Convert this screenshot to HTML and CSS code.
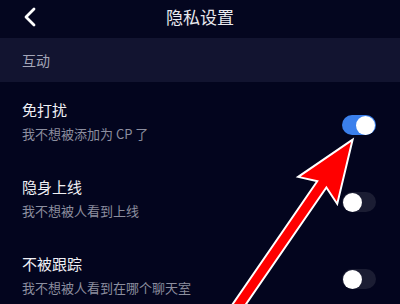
FILE: index.html
```html
<!DOCTYPE html>
<html lang="zh">
<head>
<meta charset="utf-8">
<title>隐私设置</title>
<link rel="stylesheet" href="styles.css">
</head>
<body>
<div class="page">
  <header class="topbar">
    <svg class="back" width="16" height="20" viewBox="0 0 16 20"><polyline points="11,2 3,10 11,18" fill="none" stroke="#ffffff" stroke-width="2.8" stroke-linecap="round" stroke-linejoin="round"/></svg>
    <div class="title">隐私设置</div>
  </header>
  <div class="section">互动</div>
  <div class="item">
    <div class="texts">
      <div class="item-title">免打扰</div>
      <div class="item-sub">我不想被添加为 CP 了</div>
    </div>
    <div class="toggle on"><span class="knob"></span></div>
  </div>
  <div class="item">
    <div class="texts">
      <div class="item-title">隐身上线</div>
      <div class="item-sub">我不想被人看到上线</div>
    </div>
    <div class="toggle"><span class="knob"></span></div>
  </div>
  <div class="item">
    <div class="texts">
      <div class="item-title">不被跟踪</div>
      <div class="item-sub">我不想被人看到在哪个聊天室</div>
    </div>
    <div class="toggle"><span class="knob"></span></div>
  </div>
  <svg class="arrow" width="400" height="304" viewBox="0 0 400 304">
    <polygon points="351,142 300.6,176.4 318.9,180.6 222.6,320.5 230,325.6 326.4,185.7 336.8,201.4" fill="#ff0000" stroke="#ffffff" stroke-width="4" stroke-linejoin="miter" paint-order="stroke"/>
  </svg>
</div>
</body>
</html>
```
FILE: styles.css
```css
html, body {
  margin: 0;
  padding: 0;
  background: #03051e;
}
.page {
  position: relative;
  width: 400px;
  height: 304px;
  overflow: hidden;
  background: #03051e;
  font-family: "Noto Sans CJK SC", "Noto Sans", sans-serif;
}
.topbar {
  position: relative;
  height: 38px;
  display: flex;
  align-items: center;
  justify-content: center;
  background: #04061f;
}
.back {
  position: absolute;
  left: 23px;
  top: 7px;
}
.title {
  color: #e9e9ef;
  font-size: 17px;
  line-height: 20px;
  margin-top: -4px;
}
.section {
  height: 44px;
  display: flex;
  align-items: center;
  padding-left: 22px;
  background: #121430;
  color: #a4a6b8;
  font-size: 14px;
}
.item {
  height: 77px;
  box-sizing: border-box;
  padding: 18px 24px 16px 22px;
  display: flex;
  align-items: center;
  justify-content: space-between;
}
.texts {
  display: flex;
  flex-direction: column;
  gap: 5px;
}
.item-title {
  color: #f0f0f5;
  font-size: 15px;
  line-height: 20px;
}
.item-sub {
  color: #8c8e9f;
  font-size: 13px;
  line-height: 18px;
}
.toggle {
  position: relative;
  width: 34px;
  height: 20px;
  border-radius: 10px;
  background: #1b1d33;
  margin-top: 7px;
}
.toggle.on {
  background: #3b80ec;
}
.knob {
  position: absolute;
  top: 0.5px;
  left: 0.5px;
  width: 19px;
  height: 19px;
  border-radius: 50%;
  background: #ffffff;
}
.toggle.on .knob {
  left: auto;
  right: 1px;
}
.arrow {
  position: absolute;
  left: 0;
  top: 0;
  pointer-events: none;
}
```
